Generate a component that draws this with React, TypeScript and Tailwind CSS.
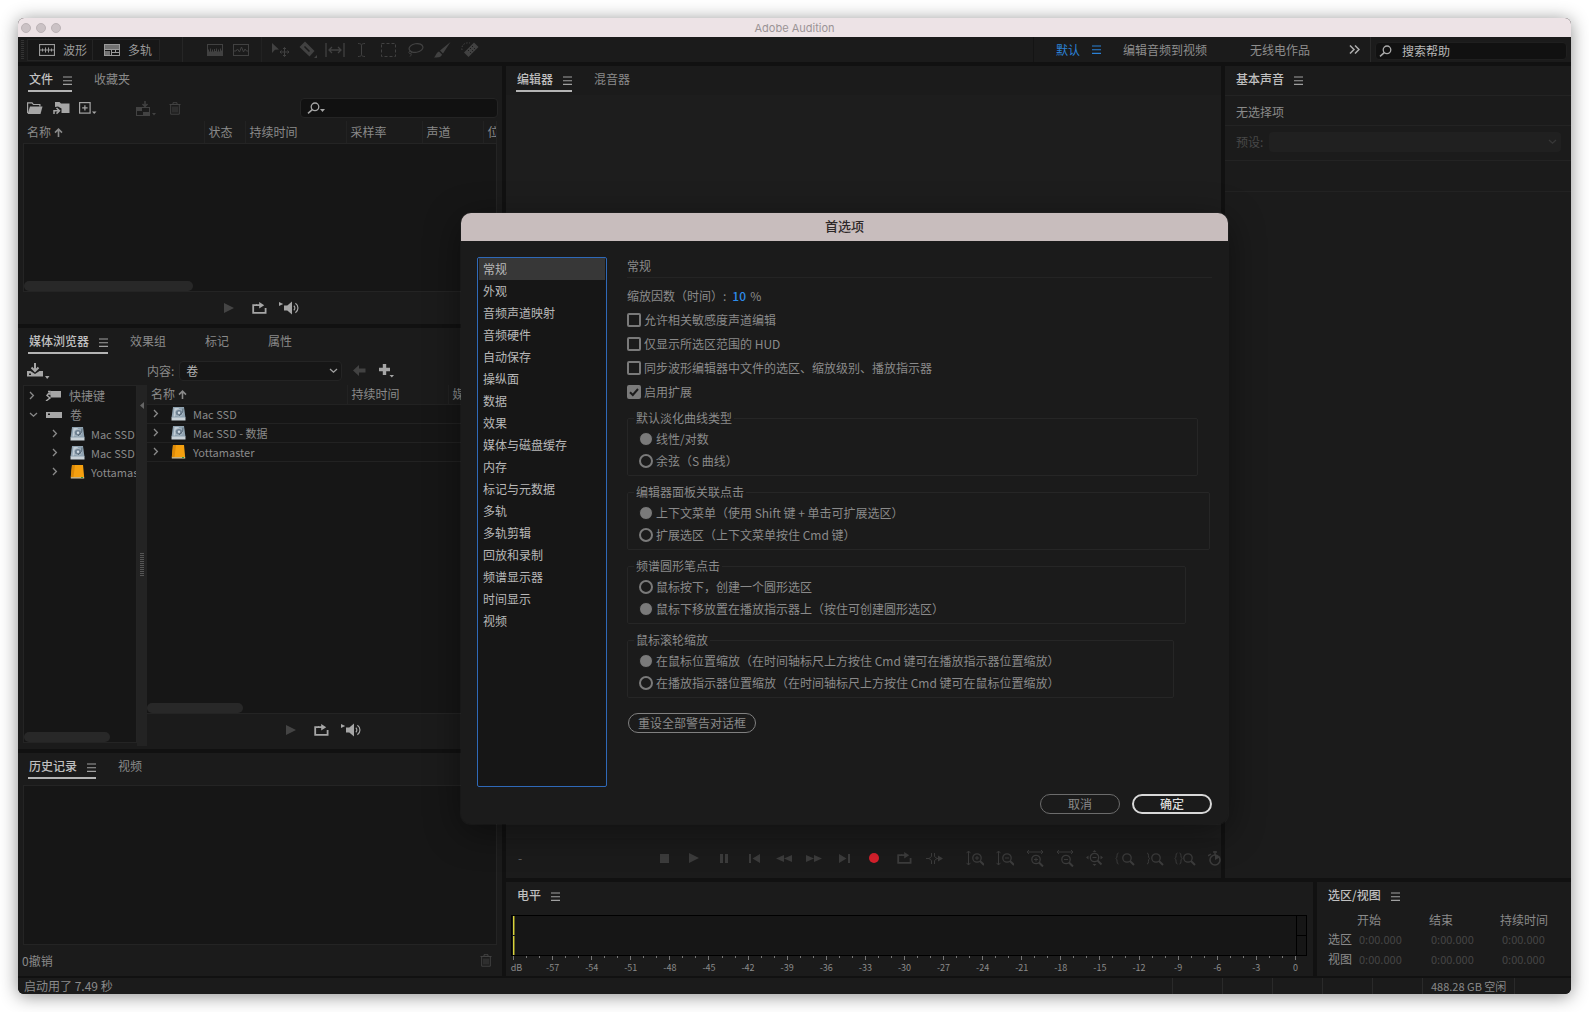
import type { ReactNode } from "react";

const categories = [
  "常规",
  "外观",
  "音频声道映射",
  "音频硬件",
  "自动保存",
  "操纵面",
  "数据",
  "效果",
  "媒体与磁盘缓存",
  "内存",
  "标记与元数据",
  "多轨",
  "多轨剪辑",
  "回放和录制",
  "频谱显示器",
  "时间显示",
  "视频",
];

const checks = [
  { id: "sensitive", label: "允许相关敏感度声道编辑", on: false },
  { id: "hud", label: "仅显示所选区范围的 HUD", on: false },
  { id: "sync", label: "同步波形编辑器中文件的选区、缩放级别、播放指示器", on: false },
  { id: "extensions", label: "启用扩展", on: true },
];

const groups = [
  {
    name: "fade",
    title: "默认淡化曲线类型",
    options: ["线性/对数", "余弦（S 曲线）"],
    selected: 0,
    width: "mr-[14px]",
  },
  {
    name: "click",
    title: "编辑器面板关联点击",
    options: ["上下文菜单（使用 Shift 键 + 单击可扩展选区）", "扩展选区（上下文菜单按住 Cmd 键）"],
    selected: 0,
    width: "mr-[2px]",
  },
  {
    name: "spectral",
    title: "频谱圆形笔点击",
    options: ["鼠标按下，创建一个圆形选区", "鼠标下移放置在播放指示器上（按住可创建圆形选区）"],
    selected: 1,
    width: "mr-[26px]",
  },
  {
    name: "wheel",
    title: "鼠标滚轮缩放",
    options: [
      "在鼠标位置缩放（在时间轴标尺上方按住 Cmd 键可在播放指示器位置缩放）",
      "在播放指示器位置缩放（在时间轴标尺上方按住 Cmd 键可在鼠标位置缩放）",
    ],
    selected: 0,
    width: "mr-[38px]",
  },
];

const dbLabels = Array.from({ length: 21 }, (_, i) => i * 3 - 60);
const dbTicks = Array.from({ length: 61 }, (_, i) => i);

interface IconProps {
  w: number;
  h: number;
  children: ReactNode;
  className?: string;
}

function Icon({ w, h, children, className = "" }: IconProps) {
  return (
    <svg
      width={w}
      height={h}
      viewBox={`0 0 ${w} ${h}`}
      fill="none"
      stroke="currentColor"
      className={`shrink-0 ${className}`}
      aria-hidden="true"
    >
      {children}
    </svg>
  );
}

function MenuIcon() {
  return (
    <Icon w={9} h={9}>
      <path d="M0 1h9M0 4.7h9M0 8.4h9" strokeWidth="1.1" />
    </Icon>
  );
}

function SearchIcon() {
  return (
    <Icon w={13} h={12}>
      <circle cx="8" cy="4.8" r="3.8" strokeWidth="1.3" />
      <path d="M5.3 7.6L1 11.4" strokeWidth="1.5" />
    </Icon>
  );
}

function Chevron({ open = false }: { open?: boolean }) {
  return open ? (
    <Icon w={9} h={6}>
      <path d="M1 1l3.5 3.2L8 1" strokeWidth="1.3" />
    </Icon>
  ) : (
    <Icon w={6} h={9}>
      <path d="M1 1l3.4 3.5L1 8" strokeWidth="1.3" />
    </Icon>
  );
}

function SortArrow() {
  return (
    <Icon w={9} h={9}>
      <path d="M4.5 9V1.5M1 4.6l3.5-3.4L8 4.6" strokeWidth="1.6" />
    </Icon>
  );
}

function TrashIcon() {
  return (
    <Icon w={12} h={13}>
      <path d="M0.5 2.5h11M4 2.2V0.7h4v1.5M1.7 2.8v9.4h8.6V2.8M4 4.5v6M6 4.5v6M8 4.5v6" />
    </Icon>
  );
}

function PlayIcon() {
  return (
    <Icon w={10} h={10}>
      <path d="M0 0l10 5-10 5z" fill="currentColor" stroke="none" />
    </Icon>
  );
}

function LoopIcon() {
  return (
    <Icon w={15} h={12}>
      <path d="M5 3.2H1.2v7.6h12.4V6" strokeWidth="1.8" />
      <path d="M4 2.3h3.2V0l5 3.2-5 3.2V4.1H4z" fill="currentColor" stroke="none" />
    </Icon>
  );
}

function SpeakerIcon() {
  return (
    <Icon w={21} h={14}>
      <path d="M0 1l4.2 2L0 5z" fill="currentColor" stroke="none" />
      <path d="M5 4.5h3.3L13 0.5v13L8.3 9.5H5z" fill="currentColor" stroke="none" />
      <path d="M14.8 4.8c1.4 1.2 1.4 3.3 0 4.5M16.4 2.3c3.4 2.4 3.4 7 0 9.5" strokeWidth="1.2" />
    </Icon>
  );
}

function MacDisk() {
  return (
    <Icon w={15} h={14}>
      <path d="M2 0h11l1.500 11H0.500z" fill="#8fa2b0" stroke="none" />
      <path d="M0.500 10.500h14v3h-14z" fill="#c9d2d8" stroke="none" />
      <path d="M3.500 1H8L4 9.500H2.500z" fill="#c2cdd6" stroke="none" />
      <ellipse cx="8" cy="5.800" rx="3.800" ry="3.400" fill="#6f8191" stroke="#b4c2cc" strokeWidth="0.8" />
      <circle cx="8" cy="5.800" r="1.200" fill="#d3dde4" stroke="none" />
      <path d="M12 1.500l-0.500 4L8 9" stroke="#4f5f6d" strokeWidth="0.8" />
    </Icon>
  );
}

function ExternalDisk() {
  return (
    <Icon w={15} h={14}>
      <path d="M2 0h11l1.200 12.500H0.800z" fill="#f5a00f" stroke="none" />
      <path d="M2 0h3L3.500 12H0.800z" fill="#dd8a08" stroke="none" />
      <path d="M0.800 12.200h13.400v1.300H0.800z" fill="#d9c9a0" stroke="none" />
      <path d="M11 12.500h2" stroke="#3c9b35" />
    </Icon>
  );
}

// magnifier with + / - and an optional range arrow
function ZoomIcon({ sign, axis }: { sign: "+" | "-" | ""; axis: "v" | "h" | "all" | "l" | "r" | "lr" }) {
  const w = axis === "lr" ? 22 : axis === "l" ? 20 : 18;
  const cx = axis === "v" ? 11 : axis === "h" ? 10 : axis === "all" ? 8.5 : w - 8;
  const cy = axis === "h" ? 9.5 : axis === "all" ? 7.5 : 8;
  return (
    <Icon w={w} h={17}>
      <circle cx={cx} cy={cy} r="4.200" strokeWidth="1.300" />
      <path d={`M${cx + 3} ${cy + 3}l4 4`} strokeWidth="2" />
      {sign !== "" && <path d={`M${cx - 2} ${cy}h4`} />}
      {sign === "+" && <path d={`M${cx} ${cy - 2}v4`} />}
      {axis === "v" && <path d="M2.500 1v14M0.500 3.200L2.500 1l2 2.200M0.500 12.800l2 2.200 2-2.200" />}
      {axis === "h" && <path d="M1 2h16M3 0L1 2l2 2M15 0l2 2-2 2" />}
      {axis === "all" && (
        <path d="M6.500 2l2-2 2 2zM6.500 14l2 2 2-2zM2.500 5.500l-2.500 2 2.500 2zM14.500 5.500l2.500 2-2.500 2z" fill="currentColor" stroke="none" />
      )}
      {axis === "l" && <path d="M3.500 3C1 3 3 7.500 1 8.500c2 1 0 5.500 2.500 5.500" />}
      {axis === "r" && <path d="M1 3c2.500 0 0.500 4.500 2.500 5.500-2 1 0 5.500-2.500 5.500" />}
      {axis === "lr" && (
        <path d="M3.500 3C1 3 3 7.500 1 8.500c2 1 0 5.500 2.500 5.500M5.500 3c2.500 0 0.500 4.500 2.500 5.500-2 1 0 5.500-2.500 5.500" />
      )}
    </Icon>
  );
}

interface TabProps {
  label: string;
  active?: boolean;
  underline?: boolean;
}

function Tab({ label, active = false, underline = true }: TabProps) {
  if (!active) {
    return (
      <button className="flex h-[26px] items-center pr-[17px] whitespace-nowrap text-[#8a8a8a]">
        {label}
      </button>
    );
  }
  return (
    <button
      className={`flex h-[26px] items-center gap-2.5 border-b-2 pt-0.5 pl-px font-medium whitespace-nowrap text-[#c0c0c0] ${
        underline ? "border-[#b4b4b4]" : "border-transparent"
      }`}
    >
      {label}
      <span className="pt-0.5 text-[#a0a0a0]">
        <MenuIcon />
      </span>
    </button>
  );
}

function Tabs({ children }: { children: ReactNode }) {
  return <div className="flex h-[29px] shrink-0 items-start gap-[22px] pl-2.5">{children}</div>;
}

function PreviewControls() {
  return (
    <div className="flex h-8 shrink-0 items-center justify-center gap-[18px] pl-[3px] text-[#a6a6a6]">
      <button aria-label="播放" className="text-[#444]">
        <PlayIcon />
      </button>
      <button aria-label="循环">
        <LoopIcon />
      </button>
      <button aria-label="自动播放" className="-ml-1.5">
        <SpeakerIcon />
      </button>
    </div>
  );
}

function Toolbar() {
  const tools: [string, ReactNode][] = [
    ["移动", (
      <Icon w={19} h={14}>
        <path d="M1 0l7 6.500-4 0.200L1 10z" fill="currentColor" stroke="none" />
        <path d="M13.500 4.500v9M9 9h9M12 6l1.500-1.500L15 6M12 12l1.500 1.500L15 12M10.500 7.500L9 9l1.500 1.500M16.500 7.500L18 9l-1.500 1.500" />
      </Icon>
    )],
    ["切断", (
      <Icon w={18} h={17}>
        <path d="M6 0.500L15.500 10l-5 5.500L0.500 6z" fill="currentColor" stroke="none" />
        <path d="M5.500 5.500l5 5" stroke="#1b1b1b" strokeWidth="1.500" />
        <path d="M18 14v3h-3z" fill="currentColor" stroke="none" />
      </Icon>
    )],
    ["滑动", (
      <Icon w={20} h={14}>
        <path d="M1 0v14M19 0v14M4 7h12M7 4L4 7l3 3M13 4l3 3-3 3" strokeWidth="1.300" />
      </Icon>
    )],
    ["时间选择", (
      <Icon w={9} h={14}>
        <path d="M1 0.500c2 0 3.500 0.500 3.500 2v9c0 1.500-1.500 2-3.500 2M8 0.500c-2 0-3.500 0.500-3.500 2v9c0 1.500 1.500 2 3.500 2" />
      </Icon>
    )],
    ["框选", (
      <Icon w={15} h={14}>
        <rect x="0.500" y="0.500" width="14" height="13" strokeDasharray="3 2" />
      </Icon>
    )],
    ["套索", (
      <Icon w={17} h={14}>
        <ellipse cx="9" cy="5" rx="7" ry="4.300" strokeWidth="1.200" transform="rotate(-10 9 5)" />
        <path d="M3 8c-2 1-1 3 0.500 2.500S4.500 8 3 8M4 10.500c0.500 1 0 2-1 3" />
      </Icon>
    )],
    ["画笔", (
      <Icon w={17} h={16}>
        <path d="M16.500 0L9 11.500 6 8.500zM5 9.500l3 3c-1 3-4 3-8 3 2-1.500 2-5 5-6z" fill="currentColor" stroke="none" />
      </Icon>
    )],
    ["修复", (
      <Icon w={18} h={17}>
        <path d="M13 1.500l4.500 4.500L7.500 16 3 11.500z" fill="currentColor" stroke="none" />
        <path d="M9 7l3.500 3.500M7 9l3.500 3.500M11 5l3.500 3.500" stroke="#1b1b1b" strokeDasharray="1.500 1.500" />
        <path d="M1 9c-1-4 2-8 8-7" strokeDasharray="1.500 1.500" />
      </Icon>
    )],
  ];

  return (
    <div className="flex h-[25px] shrink-0 items-center bg-[#1b1b1b]">
      <div className="ml-[3px] h-5 w-[3px] bg-[repeating-linear-gradient(#333_0_1px,transparent_1px_2px)]" />
      <div className="ml-[3px] flex h-[22px] border border-[#242424] bg-[#171717] text-[#9a9a9a]">
        <button className="flex w-[65px] items-center gap-2 border-r border-[#242424] pl-[11px]">
          <Icon w={16} h={12}>
            <rect x="0.500" y="0.500" width="15" height="11" strokeWidth="1.200" />
            <path d="M1 6h14M3.500 4.500v3M6.500 3.500v5M9.500 3.500v5M12.500 4.500v3" />
          </Icon>
          波形
        </button>
        <button className="flex w-[66px] items-center gap-2 pl-[11px]">
          <Icon w={16} h={12}>
            <path d="M0 0h16v5H0z" fill="currentColor" fillOpacity="0.700" stroke="none" />
            <path d="M0 7h6v5H0z" fill="currentColor" fillOpacity="0.700" stroke="none" />
            <rect x="0.500" y="0.500" width="15" height="11" />
            <path d="M0 5.500h16M7.500 6v6M8 8.500h7M11.500 5.500v3" />
          </Icon>
          多轨
        </button>
      </div>
      <div className="ml-[22px] h-full w-px bg-[#262626]" />
      <div className="ml-[19px] flex text-[#414141]">
        <button aria-label="频谱" className="flex w-[26px] justify-center">
          <Icon w={16} h={12}>
            <rect x="0.500" y="0.500" width="15" height="11" />
            <path d="M1 11V5.500h1v2h1v-3h1v3h1v-2h1v2h1V5h1v2h1V4.500h1v3h1v-2h1v2h1v-3h1v2h1V11z" fill="currentColor" stroke="none" />
          </Icon>
        </button>
        <button aria-label="音高" className="flex w-[26px] justify-center">
          <Icon w={16} h={12}>
            <rect x="0.500" y="0.500" width="15" height="11" />
            <path d="M1 7h2l1.500-2 2 3 2-5 2 5 1.500-3 1.500 2H15" />
          </Icon>
        </button>
      </div>
      <div className="ml-[7px] h-full w-px bg-[#222]" />
      <div className="ml-[5px] flex items-center text-[#414141]">
        {tools.map(([name, icon]) => (
          <button key={name} aria-label={name} className="flex w-[27px] justify-center">
            {icon}
          </button>
        ))}
      </div>
      <nav className="ml-auto flex h-full items-center border-l border-[#141414] pl-[22px] whitespace-nowrap text-[#8e8e8e]">
        <button className="flex items-center gap-3 text-[#2b81d6]">
          默认
          <MenuIcon />
        </button>
        <button className="ml-[22px]">编辑音频到视频</button>
        <button className="ml-[43px]">无线电作品</button>
        <button aria-label="更多工作区" className="ml-[39px] text-[#b0b0b0]">
          <Icon w={11} h={9}>
            <path d="M1 0.500l4 4-4 4M6 0.500l4 4-4 4" strokeWidth="1.500" />
          </Icon>
        </button>
      </nav>
      <div className="ml-2.5 h-full w-px bg-[#2a2a2a]" />
      <label className="mt-[3px] mr-1 ml-1 flex h-[18px] w-[192px] items-center gap-2.5 rounded-sm border border-[#1f1f1f] bg-[#111] pl-[3px] text-[#aaa]">
        <SearchIcon />
        <input
          aria-label="搜索帮助"
          placeholder="搜索帮助"
          className="w-32 bg-transparent outline-none placeholder:text-[#b8b8b8]"
        />
      </label>
    </div>
  );
}

function FilesPanel() {
  return (
    <section className="flex h-[258px] shrink-0 flex-col bg-[#1b1b1b]">
      <Tabs>
        <Tab label="文件" active />
        <Tab label="收藏夹" />
      </Tabs>
      <div className="flex h-[26px] shrink-0 items-center pr-1 pl-[9px] text-[#a6a6a6]">
        <button aria-label="打开文件">
          <Icon w={16} h={12}>
            <path d="M0.600 11V0.800h4.500l1.300 1.700h6.500v2" strokeWidth="1.200" />
            <path d="M3 4.500h12.500L13.500 12H0.600z" fill="currentColor" stroke="none" />
          </Icon>
        </button>
        <button aria-label="导入文件" className="ml-2.5">
          <Icon w={17} h={14}>
            <path d="M2 6V1h4.500L8 2.500h8.500V12H8.500V7.500L5 5.500z" fill="currentColor" stroke="none" />
            <path d="M1 13V9.800h5M3.500 7l3 2.800-3 2.800" strokeWidth="1.500" />
          </Icon>
        </button>
        <button aria-label="新建文件" className="ml-[9px]">
          <Icon w={18} h={13}>
            <rect x="0.600" y="0.600" width="10.500" height="10.500" strokeWidth="1.200" />
            <path d="M5.900 3.200v5.300M3.200 5.900h5.400" strokeWidth="1.200" />
            <path d="M13 9.500h4.500L15.200 12z" fill="currentColor" stroke="none" />
          </Icon>
        </button>
        <button aria-label="插入到多轨" className="ml-[39px] text-[#424242]">
          <Icon w={20} h={15}>
            <path d="M9 0v5M6.500 3L9 5.500 11.500 3" strokeWidth="1.500" />
            <rect x="0.500" y="6.500" width="13" height="8" />
            <path d="M1 7h5v3H1zM7 11h6v3H7z" fill="currentColor" stroke="none" />
            <path d="M16 12h4l-2 2.500z" fill="currentColor" stroke="none" />
          </Icon>
        </button>
        <button aria-label="删除" className="ml-[13px] text-[#424242]">
          <TrashIcon />
        </button>
        <label className="ml-auto flex h-5 w-[198px] items-center rounded-sm border border-[#242424] bg-[#111] pl-1.5">
          <SearchIcon />
          <Icon w={5} h={3} className="mt-1">
            <path d="M0 0h5L2.500 3z" fill="currentColor" stroke="none" />
          </Icon>
          <input aria-label="搜索文件" className="w-full bg-transparent outline-none" />
        </label>
      </div>
      <div className="mx-[5px] h-[22px] shrink-0 overflow-hidden">
        <table className="w-full table-fixed border-collapse text-left text-[#8a8a8a]">
          <thead>
            <tr className="h-[22px] *:border-r *:border-[#222] *:p-0 *:pl-1 *:font-normal">
              <th className="w-[181px]">
                <span className="flex items-center gap-[3px]">
                  名称
                  <SortArrow />
                </span>
              </th>
              <th className="w-[41px]">状态</th>
              <th className="w-[101px]">持续时间</th>
              <th className="w-[76px]">采样率</th>
              <th className="w-[61px]">声道</th>
              <th className="overflow-hidden">位</th>
            </tr>
          </thead>
        </table>
      </div>
      <div className="mx-[5px] flex flex-1 flex-col justify-end border border-[#242424] bg-[#161616]">
        <div className="h-2.5 w-[169px] rounded-full bg-[#282828]" />
      </div>
      <PreviewControls />
    </section>
  );
}

function MediaPanel() {
  const volumes = ["Mac SSD", "Mac SSD - 数据", "Yottamaster"];
  const tree = ["Mac SSD", "Mac SSD", "Yottamas"];
  return (
    <section className="flex min-h-0 flex-1 flex-col bg-[#1b1b1b] pb-[3px]">
      <Tabs>
        <Tab label="媒体浏览器" active />
        <Tab label="效果组" />
        <Tab label="标记" />
        <Tab label="属性" />
      </Tabs>
      <div className="flex h-[27px] shrink-0 items-center pl-[9px] text-[#a6a6a6]">
        <button aria-label="导入" className="w-[120px]">
          <Icon w={23} h={16}>
            <path d="M8 0v7M4.500 4.500L8 8l3.500-3.500" strokeWidth="2" />
            <path d="M0 8h3.500L8 11l4.500-3H16v5.500H0zM2 10.500v1.500h2v-1.500z" fill="currentColor" stroke="none" />
            <path d="M18 13h4.500L20.200 16z" fill="currentColor" stroke="none" />
          </Icon>
        </button>
        <label htmlFor="content" className="text-[#8a8a8a]">
          内容:
        </label>
        <div className="relative ml-[5px] text-[#b4b4b4]">
          <select
            id="content"
            className="h-5 w-[163px] appearance-none rounded-sm border border-[#242424] bg-[#161616] pl-1.5 leading-4 outline-none"
          >
            <option>卷</option>
          </select>
          <span className="pointer-events-none absolute top-[7px] right-1 text-[#a0a0a0]">
            <Chevron open />
          </span>
        </div>
        <button aria-label="后退" className="ml-[11px] text-[#424242]">
          <Icon w={13} h={11}>
            <path d="M0 5.500L6 0v3.500h6.500v4H6V11z" fill="currentColor" stroke="none" />
          </Icon>
        </button>
        <button aria-label="添加" className="ml-[13px]">
          <Icon w={15} h={14}>
            <path d="M5.500 0v11M0 5.500h11" strokeWidth="3.400" />
            <path d="M10.500 11H15l-2.200 2.500z" fill="currentColor" stroke="none" />
          </Icon>
        </button>
      </div>
      <div className="mt-px flex min-h-0 flex-1 text-[#8a8a8a]">
        <div className="mb-[3px] ml-[5px] flex w-[114px] shrink-0 flex-col overflow-hidden border border-[#242424] bg-[#161616] whitespace-nowrap">
          <ul className="flex-1 *:flex *:h-[19px] *:items-center">
            <li className="gap-2 pl-[5px]">
              <Chevron />
              <Icon w={18} h={11} className="text-[#a6a6a6]">
                <path d="M7.500 1H18v6.500H7.500z" fill="currentColor" stroke="none" />
                <path d="M5 1.500h2v3.500M6 3L4 5.500l3 2.500-4 3" strokeWidth="1.500" />
              </Icon>
              <span>快捷键</span>
            </li>
            <li className="gap-2 pl-[5px]">
              <Chevron open />
              <Icon w={16} h={6} className="text-[#a6a6a6]">
                <path d="M0 0h16v6H0zM2 1.500V3h2V1.500z" fill="currentColor" fillRule="evenodd" stroke="none" />
              </Icon>
              卷
            </li>
            {tree.map((v, i) => (
              <li key={i} className="pl-7 text-[11px]">
                <Chevron />
                <span className="mr-1.5 ml-3">{v === "Yottamas" ? <ExternalDisk /> : <MacDisk />}</span>
                {v}
              </li>
            ))}
          </ul>
          <div className="h-2.5 w-[86px] rounded-full bg-[#282828]" />
        </div>
        <div className="flex w-2.5 shrink-0 flex-col items-center bg-[#232323] pt-[17px]">
          <Icon w={4} h={7}>
            <path d="M4 0v7L0 3.500z" fill="#666" stroke="none" />
          </Icon>
          <div className="mt-36 h-6 w-1 bg-[repeating-linear-gradient(#555_0_1px,transparent_1px_2px)]" />
        </div>
        <div className="mr-[5px] flex min-w-0 flex-1 flex-col">
          <div className="flex min-h-0 flex-1 flex-col overflow-hidden border-b border-[#242424] bg-[#161616]">
            <table className="w-full table-fixed border-collapse text-left">
              <thead>
                <tr className="h-[19px] bg-[#1b1b1b] *:border-r *:border-[#222] *:p-0 *:pl-1 *:font-normal">
                  <th className="w-[200px]">
                    <span className="flex items-center gap-[3px]">
                      名称
                      <SortArrow />
                    </span>
                  </th>
                  <th className="w-[101px]">持续时间</th>
                  <th>媒体</th>
                </tr>
              </thead>
              <tbody>
                {volumes.map((v) => (
                  <tr key={v} className="h-[19px] border-y border-[#222] text-[11px]">
                    <td colSpan={3} className="p-0">
                      <span className="flex items-center pl-1.5">
                        <Chevron />
                        <span className="mr-[7px] ml-3">{v === "Yottamaster" ? <ExternalDisk /> : <MacDisk />}</span>
                        {v}
                      </span>
                    </td>
                  </tr>
                ))}
              </tbody>
            </table>
            <div className="mt-auto h-2.5 w-24 shrink-0 rounded-full bg-[#282828]" />
          </div>
          <PreviewControls />
        </div>
      </div>
    </section>
  );
}

function HistoryPanel() {
  return (
    <section className="flex h-[223px] shrink-0 flex-col bg-[#1b1b1b]">
      <Tabs>
        <Tab label="历史记录" active />
        <Tab label="视频" />
      </Tabs>
      <div className="mx-[5px] mt-[3px] flex-1 border border-[#242424] bg-[#161616]" />
      <div className="flex h-[31px] items-center justify-between pr-2.5 pl-1 text-[#8a8a8a]">
        0撤销
        <button aria-label="删除历史" className="text-[#424242]">
          <TrashIcon />
        </button>
      </div>
    </section>
  );
}

function Transport() {
  const playback: [string, ReactNode][] = [
    ["停止", <Icon w={9} h={9}><path d="M0 0h9v9H0z" fill="currentColor" stroke="none" /></Icon>],
    ["播放", <PlayIcon />],
    ["暂停", <Icon w={8} h={9}><path d="M0 0h3v9H0zM5 0h3v9H5z" fill="currentColor" stroke="none" /></Icon>],
    ["上一个", <Icon w={11} h={9}><path d="M0 0h2v9H0zM11 0v9L3.500 4.500z" fill="currentColor" stroke="none" /></Icon>],
    ["快退", <Icon w={16} h={7}><path d="M8 0v7L0 3.500zM16 0v7L8 3.500z" fill="currentColor" stroke="none" /></Icon>],
    ["快进", <Icon w={16} h={7}><path d="M0 0v7l8-3.500zM8 0v7l8-3.500z" fill="currentColor" stroke="none" /></Icon>],
    ["下一个", <Icon w={11} h={9}><path d="M9 0h2v9H9zM0 0v9l7.500-4.500z" fill="currentColor" stroke="none" /></Icon>],
    ["录制", <Icon w={10} h={10}><circle cx="5" cy="5" r="5" fill="#d6202c" stroke="none" /></Icon>],
    ["循环播放", <LoopIcon />],
    ["跳过所选项目", (
      <Icon w={17} h={11}>
        <path d="M5.500 0v3.500L3 5.500l2.500 2V11M8.500 0v3.500L11 5.500l-2.500 2V11M0 5.500h3M11 5.500h4" />
        <path d="M12 2.500l5 3-5 3z" fill="currentColor" stroke="none" />
      </Icon>
    )],
  ];
  const zooms: [string, ReactNode][] = [
    ["放大振幅", <ZoomIcon sign="+" axis="v" />],
    ["缩小振幅", <ZoomIcon sign="-" axis="v" />],
    ["放大时间", <ZoomIcon sign="+" axis="h" />],
    ["缩小时间", <ZoomIcon sign="-" axis="h" />],
    ["全部缩小", <ZoomIcon sign="-" axis="all" />],
    ["放大入点", <ZoomIcon sign="" axis="l" />],
    ["放大出点", <ZoomIcon sign="" axis="r" />],
    ["缩放至选区", <ZoomIcon sign="" axis="lr" />],
    ["定时录制", (
      <Icon w={14} h={15}>
        <circle cx="7" cy="9" r="5" strokeWidth="1.600" />
        <path d="M7 0v4M5 1h4M0 5l3-2" strokeWidth="1.500" />
        <path d="M7 9V3.500L12.500 6z" fill="currentColor" stroke="none" />
      </Icon>
    )],
  ];
  return (
    <div className="flex h-10 shrink-0 items-center overflow-hidden text-[#3c3c3c]">
      <span className="w-[143px] shrink-0 pl-3 text-[#666]">-</span>
      {playback.map(([name, icon]) => (
        <button key={name} aria-label={name} className="flex w-[30px] shrink-0 justify-center">
          {icon}
        </button>
      ))}
      <div className="w-[11px] shrink-0" />
      {zooms.map(([name, icon]) => (
        <button key={name} aria-label={name} className="flex w-[30px] shrink-0 justify-center">
          {icon}
        </button>
      ))}
    </div>
  );
}

function EssentialSound() {
  return (
    <section className="flex w-[346px] shrink-0 flex-col bg-[#1b1b1b] text-[#8a8a8a]">
      <Tabs>
        <Tab label="基本声音" active underline={false} />
      </Tabs>
      <div className="flex h-[30px] items-center border-t border-[#232323] pt-0.5 pl-[11px]">无选择项</div>
      <div className="flex h-9 items-center border-y border-[#232323] pr-2.5 pb-0.5 pl-[11px] text-[#484848]">
        <label htmlFor="preset">预设:</label>
        <div className="relative ml-1.5 flex-1">
          <select
            id="preset"
            disabled
            className="block h-5 w-full appearance-none rounded-sm bg-[#202020]"
          />
          <span className="pointer-events-none absolute top-[7px] right-1 text-[#383838]">
            <Chevron open />
          </span>
        </div>
      </div>
      <div className="h-[31px] border-b border-[#222]" />
    </section>
  );
}

function LevelsPanel() {
  return (
    <section className="min-w-0 flex-1 bg-[#1b1b1b]">
      <Tabs>
        <Tab label="电平" active underline={false} />
      </Tabs>
      <div className="mt-1 mr-1.5 ml-[5px]">
        <div className="flex h-[41px] border border-black bg-[#161616]">
          <div className="ml-px flex w-0.5 flex-col gap-px">
            <div className="flex-1 border-r border-[#6d6a20] bg-[#d8d33c]" />
            <div className="flex-1 border-r border-[#6d6a20] bg-[#d8d33c]" />
          </div>
          <div className="ml-auto flex w-2.5 flex-col border-l border-black">
            <div className="flex-1 border-b border-black" />
            <div className="flex-1" />
          </div>
        </div>
        <div className="mr-[11px] ml-0.5">
          <div className="flex h-1 justify-between">
            {dbTicks.map((i) => (
              <span key={i} className={`w-px bg-[#777] ${i % 3 === 0 ? "h-1" : "h-0.5"}`} />
            ))}
          </div>
          <div className="flex justify-between text-[9px] leading-4 text-[#8a8a8a]">
            {dbLabels.map((db) => (
              <span key={db} className="flex w-px justify-center">
                <span className={db === -60 ? "pl-1.5" : ""}>{db === -60 ? "dB" : db}</span>
              </span>
            ))}
          </div>
        </div>
      </div>
    </section>
  );
}

function SelectionPanel() {
  return (
    <section className="w-[254px] shrink-0 bg-[#1b1b1b]">
      <Tabs>
        <Tab label="选区/视图" active underline={false} />
      </Tabs>
      <table className="ml-[11px] table-fixed text-left text-[#8a8a8a] [&_td]:p-0 [&_th]:p-0 [&_th]:font-normal">
        <thead>
          <tr className="h-[18px]">
            <th className="w-[29px]" />
            <th className="w-[72px]">开始</th>
            <th className="w-[71px]">结束</th>
            <th className="w-[60px]">持续时间</th>
          </tr>
        </thead>
        <tbody>
          {["选区", "视图"].map((row) => (
            <tr key={row} className="h-5 text-[#464646] [&_td]:pl-0.5 [&_td]:text-[11px]">
              <th className="text-[#8a8a8a]">{row}</th>
              <td>0:00.000</td>
              <td>0:00.000</td>
              <td>0:00.000</td>
            </tr>
          ))}
        </tbody>
      </table>
    </section>
  );
}

function Preferences() {
  return (
    <div
      role="dialog"
      aria-label="首选项"
      className="absolute top-[195px] left-[443px] w-[767px] overflow-hidden rounded-[10px] bg-[#1b1b1b] text-[#8a8a8a] shadow-[0_8px_36px_rgba(0,0,0,0.45),0_0_0_1px_rgba(255,255,255,0.04)]"
    >
      <h1 className="flex h-7 items-center justify-center bg-[#c8bdbd] pb-0.5 text-[13px] font-medium text-[#2d2828]">
        首选项
      </h1>
      <div className="flex gap-5 px-4 pt-4">
        <ul className="h-[530px] w-[130px] shrink-0 rounded-xs border border-[#2f69b8] bg-[#161616] px-px">
          {categories.map((name, i) => (
            <li key={name}>
              <button
                className={`flex h-[22px] w-full items-center pl-1 text-[#b8b8b8] ${
                  i === 0 ? "bg-[#373737]" : ""
                }`}
              >
                {name}
              </button>
            </li>
          ))}
        </ul>
        <div className="flex-1">
          <h2 className="h-[21px] border-b border-[#242424] leading-[18px]">常规</h2>
          <div className="mt-1.5 flex h-6 items-center">
            <label htmlFor="zoom">缩放因数（时间）:</label>
            <input
              id="zoom"
              defaultValue="10"
              className="mr-0.5 ml-1.5 w-4 bg-transparent font-medium text-[#2d8ceb] outline-none"
            />
            %
          </div>
          {checks.map((c) => (
            <div key={c.id} className="flex h-6 items-center gap-[3px]">
              <span className="relative flex">
                <input
                  id={c.id}
                  type="checkbox"
                  defaultChecked={c.on}
                  className="size-3.5 appearance-none rounded-xs border-2 border-[#7a7a7a] checked:bg-[#7a7a7a]"
                />
                {c.on && (
                  <span className="pointer-events-none absolute inset-0 text-[#1b1b1b]">
                    <Icon w={14} h={14}>
                      <path d="M3 7.200l2.800 2.800L11 4" strokeWidth="2" />
                    </Icon>
                  </span>
                )}
              </span>
              <label htmlFor={c.id}>{c.label}</label>
            </div>
          ))}
          <div className="mt-1.5 flex flex-col gap-2">
            {groups.map((g) => (
              <fieldset key={g.name} className={`rounded-xs border border-[#262626] pb-[3px] pl-[11px] ${g.width}`}>
                <legend className="mb-0.5 -ml-[5px] px-0.5 leading-4">{g.title}</legend>
                {g.options.map((option, i) => (
                  <label key={option} className="flex h-[22px] items-center gap-[3px] whitespace-nowrap">
                    <input
                      type="radio"
                      name={g.name}
                      defaultChecked={i === g.selected}
                      className="size-3.5 appearance-none rounded-full border-2 border-[#7a7a7a] checked:border checked:border-[#1b1b1b] checked:bg-[#7a7a7a]"
                    />
                    {option}
                  </label>
                ))}
              </fieldset>
            ))}
          </div>
          <button className="mt-[15px] ml-px h-5 rounded-full border border-[#808080] px-[9px] leading-4">
            重设全部警告对话框
          </button>
        </div>
      </div>
      <div className="mt-[7px] flex justify-end gap-3 px-4 pb-2.5">
        <button className="h-5 w-20 rounded-full border border-[#6c6c6c] leading-4">取消</button>
        <button className="h-5 w-20 rounded-full border-2 border-[#d8d8d8] leading-4 font-medium text-[#dcdcdc]">
          确定
        </button>
      </div>
    </div>
  );
}

function App() {
  return (
    <div className='h-screen min-h-[900px] bg-white p-[18px] font-["Noto_Sans_CJK_SC",sans-serif] text-xs leading-4'>
      <div className="relative flex h-full flex-col rounded-md bg-[#111] shadow-[0_2px_18px_rgba(0,0,0,0.45)]">
        <header className="grid h-[19px] shrink-0 grid-cols-[1fr_auto_1fr] items-center rounded-t-md bg-[#ede3e6] text-[#9b9496]">
          <div className="flex gap-[5px] pl-[3px]">
            {["关闭", "最小化", "全屏"].map((name) => (
              <button key={name} aria-label={name} className="size-2.5 rounded-full border border-[#bcb3b6] bg-[#cbc2c5]" />
            ))}
          </div>
          <span className='font-["Inter",sans-serif] text-[11px]'>Adobe Audition</span>
        </header>
        <Toolbar />
        <main className="mt-1 flex min-h-0 flex-1 gap-1">
          <div className="flex w-[484px] shrink-0 flex-col gap-1">
            <FilesPanel />
            <MediaPanel />
            <HistoryPanel />
          </div>
          <div className="flex min-w-0 flex-1 flex-col gap-1">
            <div className="flex min-h-0 flex-1 gap-1">
              <section className="flex min-w-0 flex-1 flex-col bg-[#1b1b1b]">
                <Tabs>
                  <Tab label="编辑器" active />
                  <Tab label="混音器" />
                </Tabs>
                <div className="flex-1 bg-[#1d1d1d]" />
                <Transport />
              </section>
              <EssentialSound />
            </div>
            <div className="flex h-[94px] shrink-0 gap-1">
              <LevelsPanel />
              <SelectionPanel />
            </div>
          </div>
        </main>
        <footer className="mt-0.5 flex h-4 shrink-0 justify-between overflow-hidden rounded-b-md bg-[#1b1b1b] pl-1.5 text-[#8a8a8a]">
          <span>启动用了 7.49 秒</span>
          <div className="flex *:border-l *:border-[#2a2a2a]">
            <span className="w-[50px]" />
            <span className="w-[50px]" />
            <span className="w-[50px]" />
            <span className="w-[50px]" />
            <span className="w-[50px]" />
            <span className="w-[92px] pl-2 text-[11px] leading-4">488.28 GB 空闲</span>
            <span className="w-[57px]" />
          </div>
        </footer>
        <Preferences />
      </div>
    </div>
  );
}

export default App;
